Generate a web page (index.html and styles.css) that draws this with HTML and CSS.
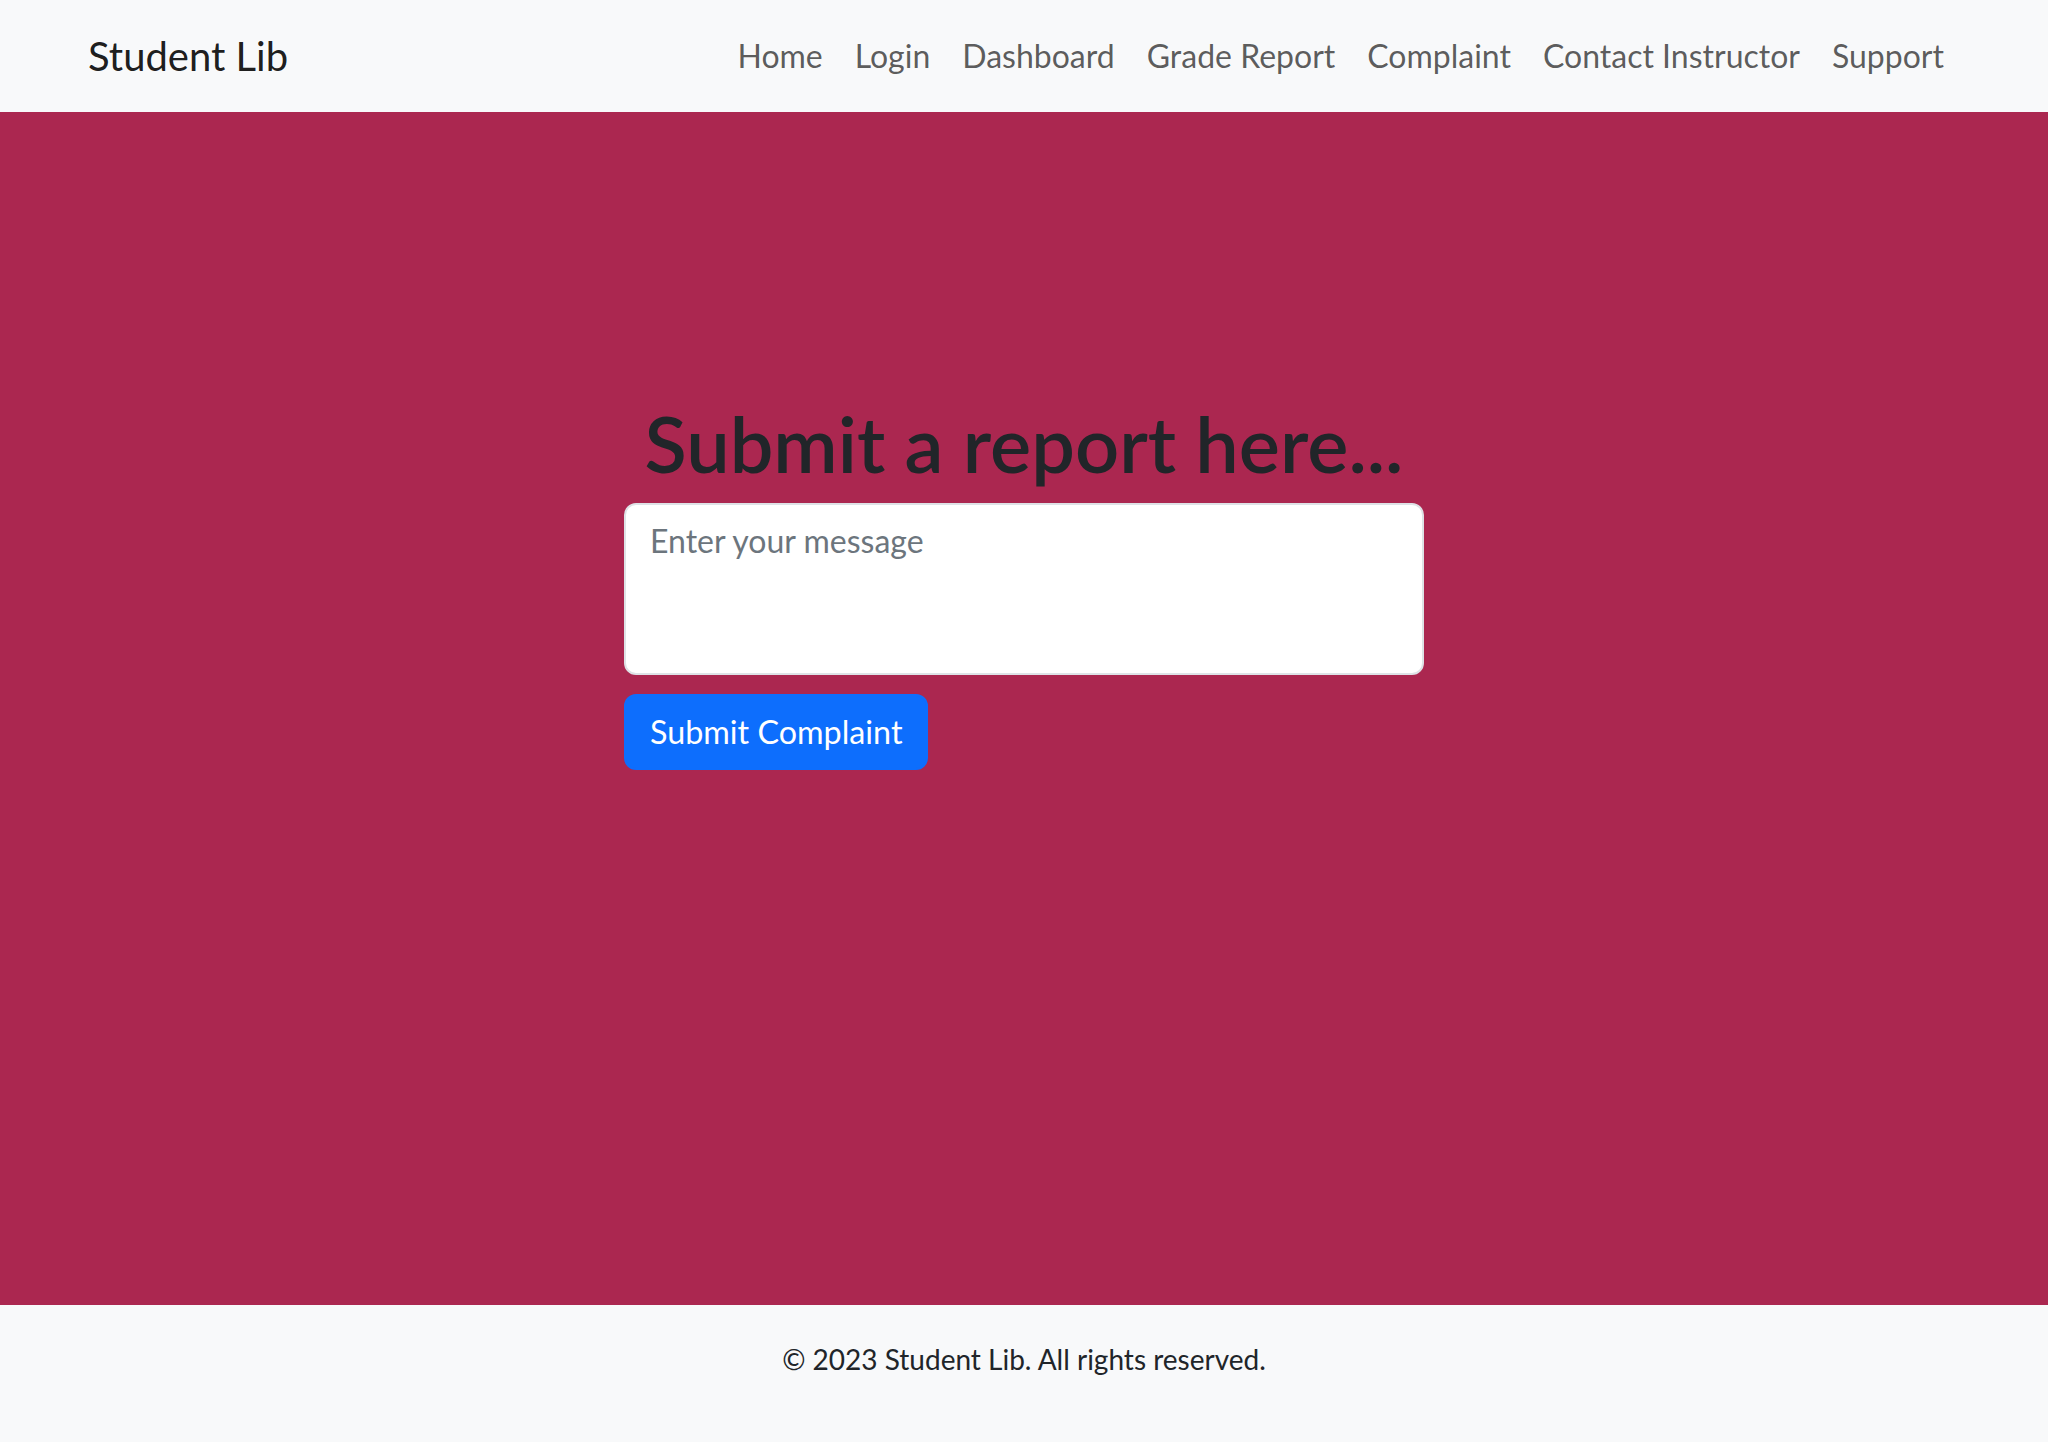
FILE: index.html
```html
<!DOCTYPE html>
<html lang="en">
<head>
<meta charset="utf-8">
<title>Student Lib - Complaint</title>
<link rel="stylesheet" href="styles.css">
</head>
<body>
<header class="navbar">
  <a class="brand" href="#">Student Lib</a>
  <nav>
    <ul class="nav-links">
      <li><a href="#">Home</a></li>
      <li><a href="#">Login</a></li>
      <li><a href="#">Dashboard</a></li>
      <li><a href="#">Grade Report</a></li>
      <li><a href="#">Complaint</a></li>
      <li><a href="#">Contact Instructor</a></li>
      <li><a href="#">Support</a></li>
    </ul>
  </nav>
</header>
<main class="hero">
  <h1 class="title">Submit a report here...</h1>
  <form class="report-form">
    <textarea class="message" rows="3" placeholder="Enter your message"></textarea>
    <button type="button" class="submit-btn">Submit Complaint</button>
  </form>
</main>
<footer class="footer">
  <p>&copy; 2023 Student Lib. All rights reserved.</p>
</footer>
</body>
</html>
```
FILE: styles.css
```css
* { box-sizing: border-box; }
html, body { margin: 0; padding: 0; }
body {
  font-family: Lato, "Open Sans", "Liberation Sans", sans-serif;
  color: #212529;
  background: #f8f9fa;
}
a { text-decoration: none; }

.navbar {
  height: 112px;
  background: #f8f9fa;
  display: flex;
  align-items: center;
  justify-content: space-between;
  padding: 0 88px;
}
.brand {
  font-size: 40px;
  line-height: 60px;
  color: rgba(0, 0, 0, 0.9);
}
.nav-links {
  display: flex;
  list-style: none;
  margin: 0;
  padding: 0;
}
.nav-links a {
  display: block;
  padding: 16px;
  font-size: 32px;
  line-height: 48px;
  color: rgba(0, 0, 0, 0.65);
}

.hero {
  background: #ab2750;
  min-height: 1193px;
  padding-top: 287px;
  display: flex;
  flex-direction: column;
  align-items: center;
}
.title {
  margin: 0 0 14px;
  font-size: 77.5px;
  line-height: 90px;
  font-weight: 600;
  color: #212529;
  text-align: center;
}
.report-form {
  width: 800px;
}
.message {
  display: block;
  width: 100%;
  height: 172px;
  padding: 12px 24px;
  font-family: inherit;
  font-size: 32px;
  line-height: 48px;
  color: #212529;
  background: #fff;
  border: 2px solid #dee2e6;
  border-radius: 12px;
  resize: none;
}
.message::placeholder { color: #6c757d; }
.submit-btn {
  display: inline-block;
  margin-top: 19px;
  padding: 12px 24px;
  font-family: inherit;
  font-size: 32.3px;
  line-height: 48px;
  color: #fff;
  background: #0d6efd;
  border: 2px solid #0d6efd;
  border-radius: 12px;
}

.footer {
  background: #f8f9fa;
  padding: 32px 0;
  text-align: center;
}
.footer p {
  margin: 0 0 32px;
  font-size: 28px;
  line-height: 45px;
  color: #212529;
}
```
